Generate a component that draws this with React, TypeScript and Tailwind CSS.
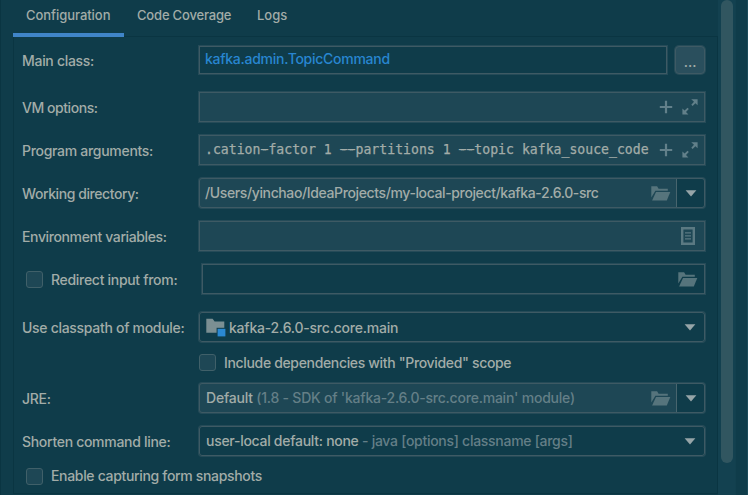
import type { ReactNode } from 'react';

const frame = 'border border-[#3e5a64] shadow-[0_0_0_1px_rgba(70,98,108,0.42)]';

function Row({ label, className, children }: { label?: string; className: string; children: ReactNode }) {
  return (
    <div className={`flex shrink-0 ${className}`}>
      <div className="flex w-[177px] shrink-0 items-center pt-[2px]">{label}</div>
      {children}
    </div>
  );
}

function Field({ className = '', children }: { className?: string; children?: ReactNode }) {
  return <div className={`flex min-w-0 items-center ${frame} ${className}`}>{children}</div>;
}

function Checkbox() {
  return <span className="size-[17px] shrink-0 rounded-[3px] border border-[#406069] bg-[#1e4755]" />;
}

function Plus() {
  return (
    <svg width="14" height="14" viewBox="0 0 14 14" className="shrink-0">
      <path d="M7 .8v12.4M.8 7h12.4" stroke="#62808a" strokeWidth="2.2" />
    </svg>
  );
}

function Expand() {
  return (
    <svg width="16" height="16" viewBox="0 0 16 16" className="shrink-0" fill="#62808a">
      <path d="M9.2.3H15.6V6.2L13.4 4.2 10.6 7 9.3 5.7l2.7-2.9zM.4 9.6 2.6 11.6 5.5 8.7l1.3 1.3-2.8 2.9L6.4 15.4H.4z" />
    </svg>
  );
}

function OpenFolder() {
  return (
    <svg width="20" height="15" viewBox="0 0 20 15" className="shrink-0" fill="#56747c">
      <path d="M.3.3h5.8l1.5 2.4h9.2v2H4.4L.3 11.5z" />
      <path d="M5 6h14.3L15.8 14.5H1.1z" />
    </svg>
  );
}

function Page() {
  return (
    <svg width="14" height="18" viewBox="0 0 14 18" className="shrink-0" fill="none" stroke="#5b7982">
      <path d="M1.2 1.2h11.6v15.6H1.2z" strokeWidth="2.4" />
      <path d="M4 5.8h6M4 8.8h6M4 11.8h6" strokeWidth="1.2" />
    </svg>
  );
}

function ModuleFolder() {
  return (
    <svg width="20" height="19" viewBox="0 0 20 19" className="shrink-0">
      <path d="M.3.8h6.3l2 2.7h9.7v11.2H.3z" fill="#7b8f93" />
      <path d="M10.6 9.8H19.6V19H10.6z" fill="#0f3c4a" />
      <path d="M11.6 10.8H19.4V18.4H11.6z" fill="#2a88d2" />
    </svg>
  );
}

function Arrow() {
  return (
    <svg width="12" height="7" viewBox="0 0 12 7" className="shrink-0">
      <path d="M.6.3h10.8L6 6.4z" fill="#96a5a8" />
    </svg>
  );
}

function DropButton() {
  return (
    <div className="flex w-[28px] shrink-0 items-center justify-center self-stretch rounded-r-[3px] border-l border-[#48656e] bg-[#0f3c4a]">
      <Arrow />
    </div>
  );
}

const args = '.cation-factor 1 --partitions 1 --topic kafka_souce_code';

export default function App() {
  return (
    <div className="flex h-[495px] w-[748px] overflow-hidden border-l border-[#0a3542] bg-[#0f3c4a] pl-3 font-['Inter','Liberation_Sans',sans-serif] text-[14px] leading-[18px] font-medium whitespace-pre text-[#a2aca8]">
      <div className="flex w-[705px] shrink-0 flex-col">
        <div className="flex h-[37px] shrink-0 text-[13px]">
          <div className="w-[111px] border-b-4 border-[#4085c8] pt-[6px] pl-[13px]">
            <span className="tracking-[-0.05px]">Configuration</span>
          </div>
          <div className="flex flex-1 border-b border-[#0a3542] pt-[6px] pl-[13px]">
            <span className="w-[120px] tracking-[-0.18px]">Code Coverage</span>
            <span>Logs</span>
          </div>
        </div>

        <div className="flex h-[457px] shrink-0 flex-col border-x border-b border-[#0a3542] pr-[12px] pl-2 tracking-[-0.3px]">
          <Row label="Main class:" className="mt-[9px] h-[28px]">
            <Field className="w-[469px] pb-[2px] pl-[5px] tracking-[-0.27px] text-[#2886d0]">
              <span>kafka.admin.TopicCommand</span>
            </Field>
            <div className={`ml-[8px] flex w-[30px] items-center justify-center rounded-[4px] bg-[#2a4f5d] pt-[3px] tracking-normal ${frame}`}>
              <span>...</span>
            </div>
          </Row>

          <Row label="VM options:" className="mt-[18px] h-[30px] tracking-[-0.45px]">
            <Field className="flex-1 justify-end gap-[9px] bg-[#1e4755] pr-[6px]">
              <Plus />
              <Expand />
            </Field>
          </Row>

          <Row label="Program arguments:" className="mt-[13px] h-[30px]">
            <Field className="flex-1 bg-[#1e4755] pr-[6px] pl-[5px]">
              <div className="w-[454px] pb-px font-['DejaVu_Sans_Mono',monospace] text-[13.17px] tracking-normal [-webkit-text-stroke:0.25px]">
                {args.split('').map((c, i) =>
                  c === '-' ? (
                    <span key={i} className="[text-shadow:2px_0_#a2aca8,-2px_0_#a2aca8]">{c}</span>
                  ) : (
                    c
                  ),
                )}
              </div>
              <span className="flex-1" />
              <Plus />
              <span className="w-[9px]" />
              <Expand />
            </Field>
          </Row>

          <Row label="Working directory:" className="mt-[13px] h-[30px] tracking-[-0.42px]">
            <Field className="flex-1 rounded-[3px] bg-[#1e4755] pl-[5px]">
              <span className="flex-1 tracking-[-0.38px]">/Users/yinchao/IdeaProjects/my-local-project/kafka-2.6.0-src</span>
              <OpenFolder />
              <span className="w-[5px]" />
              <DropButton />
            </Field>
          </Row>

          <Row label="Environment variables:" className="mt-[13px] h-[30px] tracking-[-0.38px]">
            <Field className="flex-1 justify-end bg-[#1e4755] pr-[9px]">
              <Page />
            </Field>
          </Row>

          <div className="mt-[13px] flex h-[30px] shrink-0">
            <div className="flex w-[180px] items-center pl-[4px]">
              <Checkbox />
              <span className="pt-px pl-[8px]">Redirect input from:</span>
            </div>
            <Field className="flex-1 justify-end pr-[6px]">
              <OpenFolder />
            </Field>
          </div>

          <Row label="Use classpath of module:" className="mt-[18px] h-[30px]">
            <Field className="flex-1 rounded-[3px] pr-[8px] pl-[6px]">
              <ModuleFolder />
              <span className="flex-1 pt-px pl-[3px] tracking-[-0.22px]">kafka-2.6.0-src.core.main</span>
              <Arrow />
            </Field>
          </Row>

          <Row className="mt-[11px] h-[19px]">
            <div className="flex items-center">
              <Checkbox />
              <span className="pt-px pl-[8px] tracking-[-0.34px]">Include dependencies with "Provided" scope</span>
            </div>
          </Row>

          <Row label="JRE:" className="mt-[11px] h-[30px]">
            <Field className="flex-1 rounded-[3px] bg-[#1e4755] pl-[6px] tracking-[-0.22px]">
              <span>Default </span>
              <span className="flex-1 text-[#647f87]">(1.8 - SDK of 'kafka-2.6.0-src.core.main' module)</span>
              <OpenFolder />
              <span className="w-[5px]" />
              <DropButton />
            </Field>
          </Row>

          <Row label="Shorten command line:" className="mt-[13px] h-[30px]">
            <Field className="flex-1 rounded-[3px] pr-[8px] pl-[6px] tracking-[-0.28px]">
              <span>user-local default: none </span>
              <span className="flex-1 text-[#647f87]">- java [options] classname [args]</span>
              <Arrow />
            </Field>
          </Row>

          <div className="mt-[11px] flex h-[18px] shrink-0 items-center pl-[4px]">
            <Checkbox />
            <span className="pl-[8px] tracking-[-0.33px]">Enable capturing form snapshots</span>
          </div>
        </div>
      </div>

      <div className="flex w-[18px] shrink-0 justify-center border-r border-[#12404e] bg-[#134150]">
        <div className="h-[463px] w-[12px] rounded-full bg-[#315660]" />
      </div>
      <div className="ml-auto w-px bg-[#1b4b5a]" />
    </div>
  );
}
